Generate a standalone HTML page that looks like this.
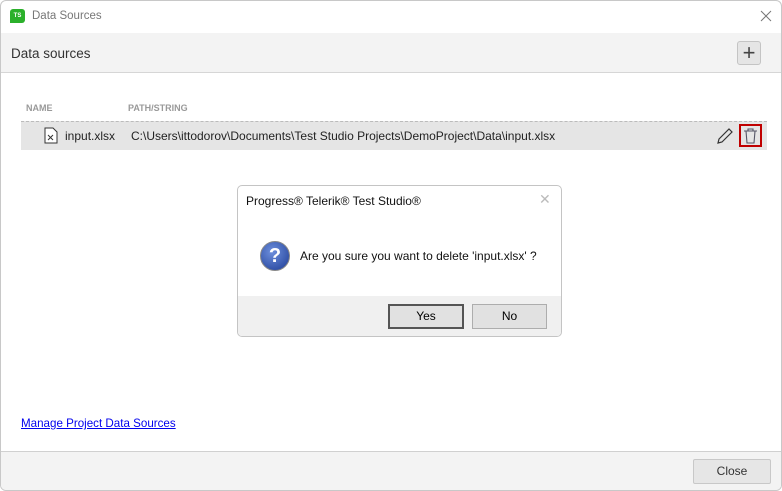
<!DOCTYPE html>
<html><head><style>
body{margin:0;width:782px;height:491px;overflow:hidden;background:#fff;font-family:"Liberation Sans",sans-serif;position:relative}
.win{position:absolute;left:0;top:0;width:782px;height:491px;box-sizing:border-box;border:1px solid #c8c8c8;border-radius:6px;background:#fff;overflow:hidden}
.a{position:absolute}
</style></head><body>
<div class="win">
<div class="a" style="left:9px;top:8px;width:15px;height:14px;background:#2bb02b;border-radius:3px 3px 3px 0;color:#fff;font-size:6px;font-weight:bold;line-height:14px;text-align:center">TS</div>
<div class="a" style="left:31px;top:9px;font-size:11.5px;color:#777">Data Sources</div>
<svg class="a" style="left:759px;top:9px" width="12" height="12" viewBox="0 0 12 12"><path d="M1 1l10 10M11 1L1 11" stroke="#777" stroke-width="1"/></svg>
<div class="a" style="left:0;top:32px;width:782px;height:39px;background:#f3f3f3;border-bottom:1px solid #d6d6d6"></div>
<div class="a" style="left:10px;top:45px;font-size:13.5px;color:#333">Data sources</div>
<div class="a" style="left:736px;top:40px;width:22px;height:22px;background:#e5e5e5;border:1px solid #c4c4c4;border-radius:3px;font-size:22px;line-height:21px;text-align:center;color:#444">+</div>
<div class="a" style="left:25px;top:102px;font-size:9px;font-weight:bold;color:#999">NAME</div>
<div class="a" style="left:127px;top:102px;font-size:9px;font-weight:bold;color:#999">PATH/STRING</div>
<div class="a" style="left:20px;top:120px;width:746px;height:28px;background:#e5e5e5;border-top:1px dashed #bbb"></div>
<svg class="a" style="left:43px;top:126px" width="14" height="17" viewBox="0 0 14 17"><path d="M1 1h8l4 4v11H1z" fill="#fff" stroke="#333"/><path d="M4 8l5 5M9 8l-5 5" stroke="#333"/></svg>
<div class="a" style="left:64px;top:128px;font-size:12px;color:#222">input.xlsx</div>
<div class="a" style="left:130px;top:128px;font-size:12px;color:#222">C:\Users\ittodorov\Documents\Test Studio Projects\DemoProject\Data\input.xlsx</div>
<svg class="a" style="left:715px;top:126px" width="18" height="18" viewBox="0 0 18 18"><path d="M2 16l1-4L13 2l3 3L6 15z" fill="none" stroke="#333" stroke-width="1.2"/></svg>
<div class="a" style="left:738px;top:123px;width:23px;height:23px;border:2px solid #c00000;box-sizing:border-box"></div>
<svg class="a" style="left:741px;top:126px" width="17" height="17" viewBox="0 0 17 17"><path d="M2 4h13M6 4V2h5v2M4 4l1 12h7l1-12" fill="none" stroke="#556" stroke-width="1.1"/></svg>
<div class="a" style="left:20px;top:416px;font-size:11.6px;color:#0000ee;text-decoration:underline">Manage Project Data Sources</div>
<div class="a" style="left:0;top:450px;width:782px;height:41px;background:#f3f3f3;border-top:1px solid #d0d0d0"></div>
<div class="a" style="left:692px;top:458px;width:76px;height:23px;background:#e6e6e6;border:1px solid #c8c8c8;border-radius:2px;font-size:12px;line-height:23px;text-align:center;color:#333">Close</div>
</div>
<div class="a" style="left:237px;top:185px;width:323px;height:150px;border:1px solid #c4c4c4;border-radius:5px;background:#fff;overflow:hidden">
<div class="a" style="left:8px;top:8px;font-size:12px;color:#111">Progress® Telerik® Test Studio®</div>
<div class="a" style="left:301px;top:5px;font-size:14px;color:#bbb">✕</div>
<div class="a" style="left:22px;top:55px;width:28px;height:28px;border-radius:50%;background:radial-gradient(circle at 40% 35%,#6d8fdc,#1d3c95);border:1px solid #888;color:#fff;font-weight:bold;font-size:20px;line-height:28px;text-align:center">?</div>
<div class="a" style="left:62px;top:63px;font-size:12px;color:#111">Are you sure you want to delete 'input.xlsx' ?</div>
<div class="a" style="left:0;top:110px;width:323px;height:40px;background:#f0f0f0"></div>
<div class="a" style="left:150px;top:118px;width:72px;height:21px;border:2px solid #555;background:#e1e1e1;font-size:12px;line-height:21px;text-align:center">Yes</div>
<div class="a" style="left:234px;top:118px;width:73px;height:23px;border:1px solid #adadad;background:#e1e1e1;font-size:12px;line-height:23px;text-align:center">No</div>
</div>
</body></html>
